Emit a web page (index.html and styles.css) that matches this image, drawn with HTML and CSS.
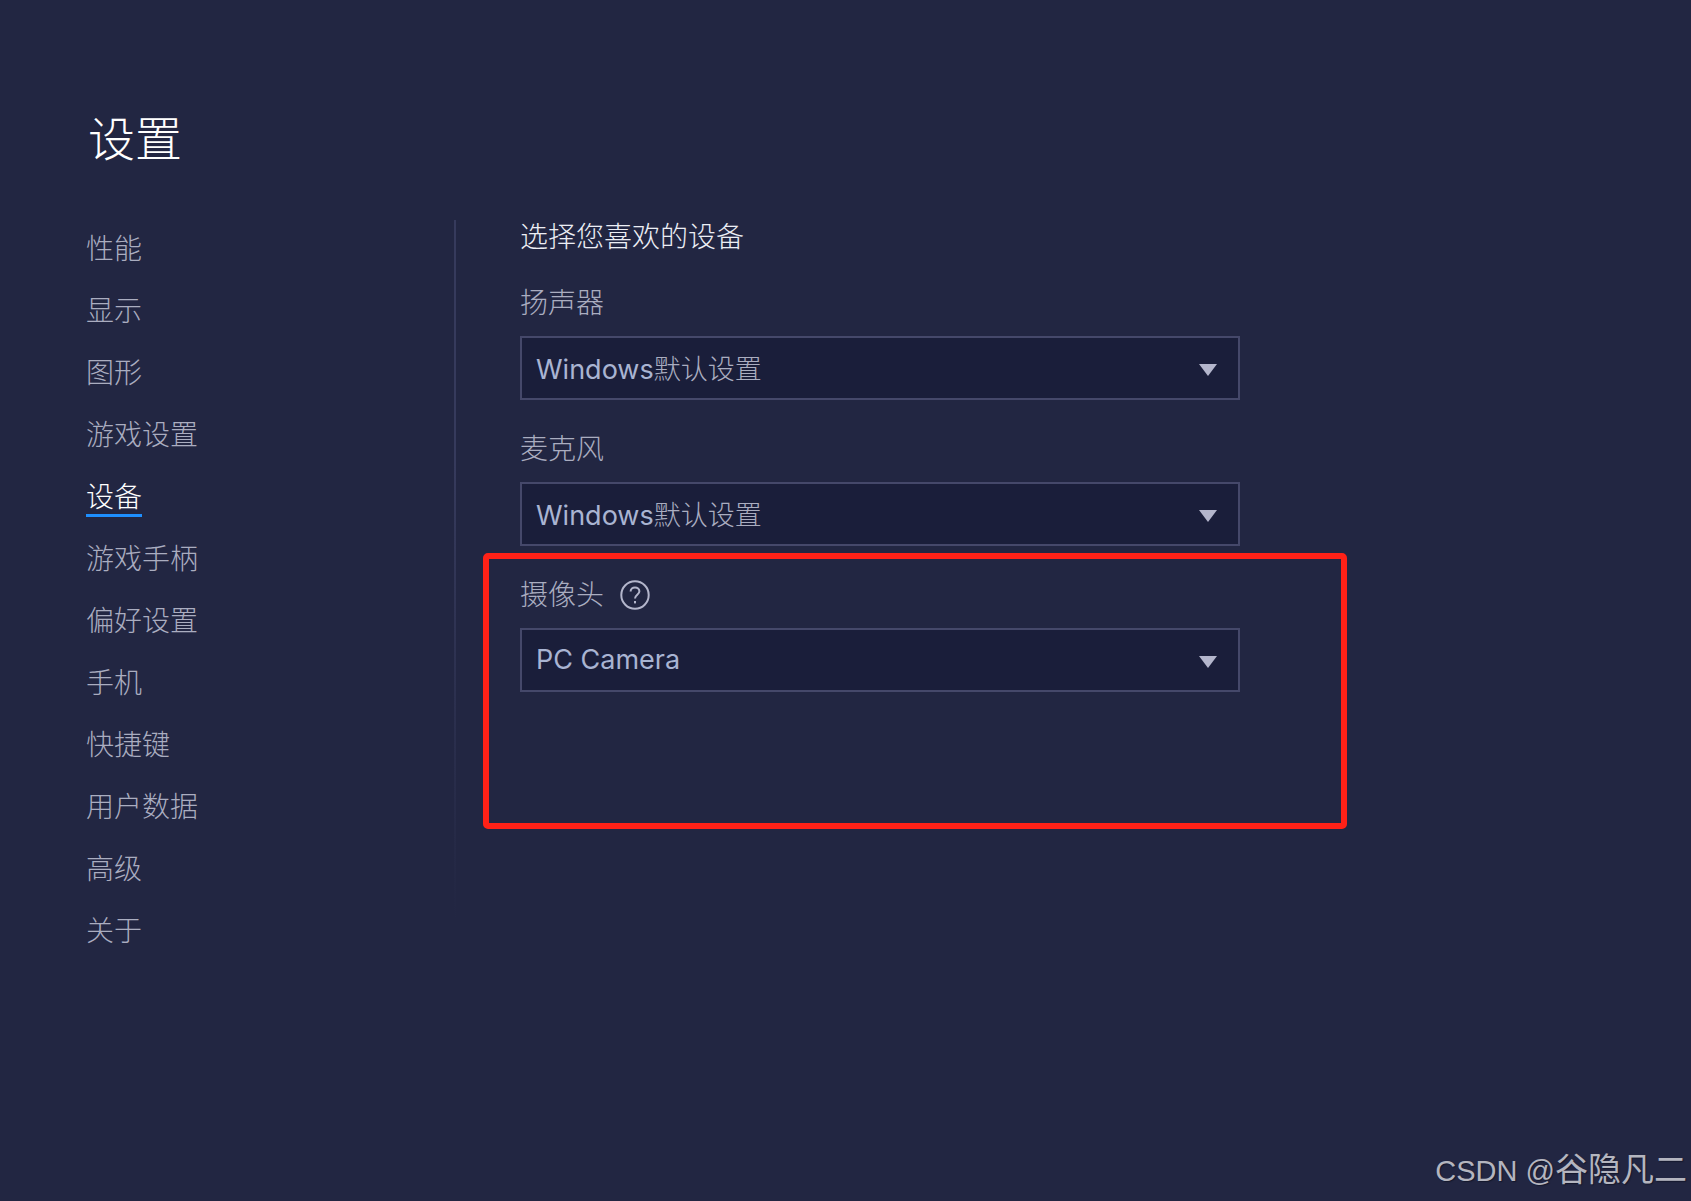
FILE: index.html
```html
<!DOCTYPE html>
<html lang="zh-CN">
<head>
	<meta charset="UTF-8">
	<title>设置</title>
	<link rel="stylesheet" href="styles.css">
</head>
<body>
	<div class="page">
		<h1 class="title">设置</h1>
		<div class="main">
			<!-- 左侧菜单 -->
			<ul class="menu">
				<li class="menu_item">性能</li>
				<li class="menu_item">显示</li>
				<li class="menu_item">图形</li>
				<li class="menu_item">游戏设置</li>
				<li class="menu_item current"><span>设备</span></li>
				<li class="menu_item">游戏手柄</li>
				<li class="menu_item">偏好设置</li>
				<li class="menu_item">手机</li>
				<li class="menu_item">快捷键</li>
				<li class="menu_item">用户数据</li>
				<li class="menu_item">高级</li>
				<li class="menu_item">关于</li>
			</ul>
			<!-- 设备 -->
			<div class="content">
				<h2 class="heading">选择您喜欢的设备</h2>
				<div class="field_label">扬声器</div>
				<div class="select">
					<span>Windows<span class="cjk">默认设置</span></span>
					<svg class="arrow" viewBox="0 0 18 12"><path d="M0 0H18L9 12Z"/></svg>
				</div>
				<div class="field_label">麦克风</div>
				<div class="select">
					<span>Windows<span class="cjk">默认设置</span></span>
					<svg class="arrow" viewBox="0 0 18 12"><path d="M0 0H18L9 12Z"/></svg>
				</div>
				<div class="field_label">
					摄像头
					<svg class="help" viewBox="0 0 30 30">
						<circle cx="15" cy="15" r="13.7"/>
						<path d="M10.6 11.6c0-2.6 2-4.2 4.4-4.2s4.4 1.6 4.4 3.9c0 3.4-4.4 3.5-4.4 7.2"/>
						<rect x="14" y="21" width="2" height="2.4"/>
					</svg>
				</div>
				<div class="select">
					<span>PC Camera</span>
					<svg class="arrow" viewBox="0 0 18 12"><path d="M0 0H18L9 12Z"/></svg>
				</div>
			</div>
		</div>
	</div>
	<div class="red_box"></div>
	<div class="watermark">CSDN @<span>谷隐凡二</span></div>
</body>
</html>
```

FILE: styles.css
```css
*{
	padding: 0;
	margin: 0;
	box-sizing: border-box;
}
body{
	width: 1691px;
	height: 1201px;
	overflow: hidden;
	position: relative;
	background: #222642;
	font-family: "Liberation Sans", "Noto Sans CJK SC", sans-serif;
}
.page{
	padding: 103px 0 0 88px;
}
.title{
	font-family: "Noto Sans CJK SC", sans-serif;
	font-size: 47px;
	font-weight: 300;
	line-height: 66px;
	color: #fff;
}
.main{
	display: flex;
	margin-top: 51px;
}
/*左侧菜单*/
.menu{
	width: 370px;
	height: 700px;
	margin-left: -2px;
	border-right: 2px solid;
	border-image: linear-gradient(#363a5c 35%, #222642) 1;
	list-style: none;
}
.menu_item{
	height: 62px;
	font-family: "Noto Sans CJK SC", sans-serif;
	font-size: 28px;
	font-weight: 300;
	line-height: 54px;
	color: #aaadc0;
}
.current{
	color: #fff;
}
.current>span{
	display: inline-block;
	height: 49px;
	border-bottom: 3px solid #1e8fff;
}
/*右侧内容*/
.content{
	width: 720px;
	margin-left: 64px;
}
.heading{
	font-family: "Noto Sans CJK SC", sans-serif;
	font-size: 28px;
	font-weight: 300;
	line-height: 30px;
	color: #eceef5;
}
.field_label{
	display: flex;
	align-items: center;
	gap: 16px;
	height: 36px;
	padding-bottom: 2px;
	font-family: "Noto Sans CJK SC", sans-serif;
	font-size: 28px;
	font-weight: 300;
	color: #aaadc0;
	margin-top: 30px;
	margin-bottom: 16px;
}
.heading+.field_label{
	margin-top: 34px;
}
.select{
	display: flex;
	align-items: center;
	justify-content: space-between;
	height: 64px;
	padding: 0 21px 2px 14px;
	background: #1a1e3a;
	border: 2px solid #45486a;
	font-family: "Inter", "Noto Sans CJK SC", sans-serif;
	font-size: 27px;
	color: #a9b4d2;
}
.cjk{
	font-family: "Noto Sans CJK SC", sans-serif;
	font-size: 27px;
	font-weight: 300;
	color: #aaadc0;
}
.arrow{
	width: 18px;
	height: 12px;
	margin-top: 6px;
	fill: #b4b6cc;
}
.help{
	width: 30px;
	height: 30px;
	margin-top: 4px;
	fill: none;
	stroke: #b4b6cc;
	stroke-width: 2;
}
.help rect{
	fill: #b4b6cc;
	stroke: none;
}
/*红框 标注*/
.red_box{
	position: absolute;
	left: 483px;
	top: 553px;
	width: 864px;
	height: 276px;
	border: 6px solid #ff2117;
	border-radius: 5px;
}
.watermark{
	position: absolute;
	right: 4px;
	top: 1148px;
	font-size: 29px;
	line-height: 44px;
	color: #b4b5bf;
	text-shadow: 1px 1px 1px #15182c;
}
.watermark>span{
	font-size: 33px;
}
```
